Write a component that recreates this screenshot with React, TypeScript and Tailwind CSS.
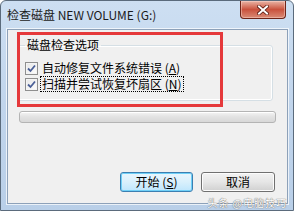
import React from 'react';

function Check() {
    return (
        <span className="w-[13px] h-[13px] border border-[#8f8f8f] bg-gradient-to-br from-[#dcdcdc] to-[#ffffff] flex items-center justify-center shrink-0">
            <span className="w-[11px] h-[11px] border border-[#f4f4f4] bg-gradient-to-br from-[#e9e9e9] to-[#fbfbfb] flex items-center justify-center">
                <svg width="9" height="9" viewBox="0 0 9 9">
                    <path d="M1 4.5 L3.5 7 L8 1.5" fill="none" stroke="#4a5f97" strokeWidth="1.8" />
                </svg>
            </span>
        </span>
    );
}

export default function App() {
    return (
        <main className="w-[294px] h-[211px] relative overflow-hidden flex flex-col border border-[#5b6b7c] rounded-t-[6px] bg-gradient-to-b from-[#cddff2] via-[#c1d5ec] to-[#b9cfe8] text-black font-['Noto_Sans_CJK_SC',sans-serif]">
            {/* title bar */}
            <div className="h-[28px] flex items-center pl-[6px] text-[12px] leading-none text-[#1b1b1b] font-['Noto_Sans_CJK_SC',sans-serif]">
                检查磁盘 NEW VOLUME (G:)
            </div>
            <button className="absolute left-[239px] top-0 w-[46px] h-[18px] rounded-b-[4px] border border-t-0 border-[#6e2418] bg-gradient-to-b from-[#e8b4a6] via-[#c9513d] to-[#d98a75] flex items-center justify-center shadow-[inset_0_0_0_1px_rgba(255,220,210,0.45)]">
                <svg width="12" height="10" viewBox="0 0 12 10">
                    <path d="M2 1.5 L10 8.5 M10 1.5 L2 8.5" stroke="#5b1a10" strokeWidth="3.6" strokeLinecap="square" />
                    <path d="M2 1.5 L10 8.5 M10 1.5 L2 8.5" stroke="#ffffff" strokeWidth="2" strokeLinecap="square" />
                </svg>
            </button>

            {/* client area */}
            <div className="ml-[6px] w-[281px] h-[175px] relative bg-[#f0f0f0] border border-[#8da1b9] shadow-[0_0_0_1px_rgba(255,255,255,0.7)] flex flex-col text-[12px] font-['Noto_Sans_CJK_SC',sans-serif]">
                <fieldset className="ml-[9px] mt-[8px] w-[256px] border border-[#d5dfe5] rounded-[3px] pl-[7px] pb-[8px] shadow-[inset_0_0_0_1px_#ffffff]">
                    <legend className="px-[2px] text-[12px] leading-[14px]">磁盘检查选项</legend>
                    <div className="mt-[8px] flex flex-col">
                        <label className="h-[16px] flex items-center gap-[4px] leading-none">
                            <Check />
                            <span>自动修复文件系统错误 (<u>A</u>)</span>
                        </label>
                        <label className="h-[16px] flex items-center gap-[3px] leading-none">
                            <Check />
                            <span className="outline outline-1 outline-dotted outline-black px-[1px] py-[1px]">扫描并尝试恢复坏扇区 (<u>N</u>)</span>
                        </label>
                    </div>
                </fieldset>

                {/* progress bar */}
                <div className="ml-[11px] mt-[10px] w-[257px] h-[12px] rounded-[3px] border border-[#b4b4b4] bg-gradient-to-b from-[#f4f4f4] via-[#e2e2e2] to-[#d8d8d8] shadow-[inset_0_1px_0_#ffffff]" />

                {/* buttons */}
                <div className="mt-[49px] pr-[12px] flex justify-end gap-[8px]">
                    <button className="w-[73px] h-[20px] rounded-[3px] border border-[#3c7fb1] bg-gradient-to-b from-[#eaf6fd] via-[#d9f0fc] to-[#bee6fd] shadow-[inset_0_0_0_1px_#6fd0f7] text-[12px] leading-none flex items-center justify-center">
                        开始 (<u>S</u>)
                    </button>
                    <button className="w-[74px] h-[20px] rounded-[3px] border border-[#707070] bg-gradient-to-b from-[#f2f2f2] via-[#e6e6e6] to-[#d0d0d0] shadow-[inset_0_0_0_1px_#fcfcfc] text-[12px] leading-none flex items-center justify-center">
                        取消
                    </button>
                </div>

                {/* red highlight annotation */}
                <div className="absolute left-[9px] top-[2px] w-[206px] h-[75px] border-[3px] border-[#e5393b] pointer-events-none" />
            </div>

            {/* watermark */}
            <span className="absolute right-[6px] bottom-[2px] text-[10px] leading-none text-white tracking-[1px] [text-shadow:0_0_1px_#6b6b6b,0_0_1px_#6b6b6b] font-['Noto_Sans_CJK_SC',sans-serif]">
                头条 @电脑技巧
            </span>
        </main>
    );
}
